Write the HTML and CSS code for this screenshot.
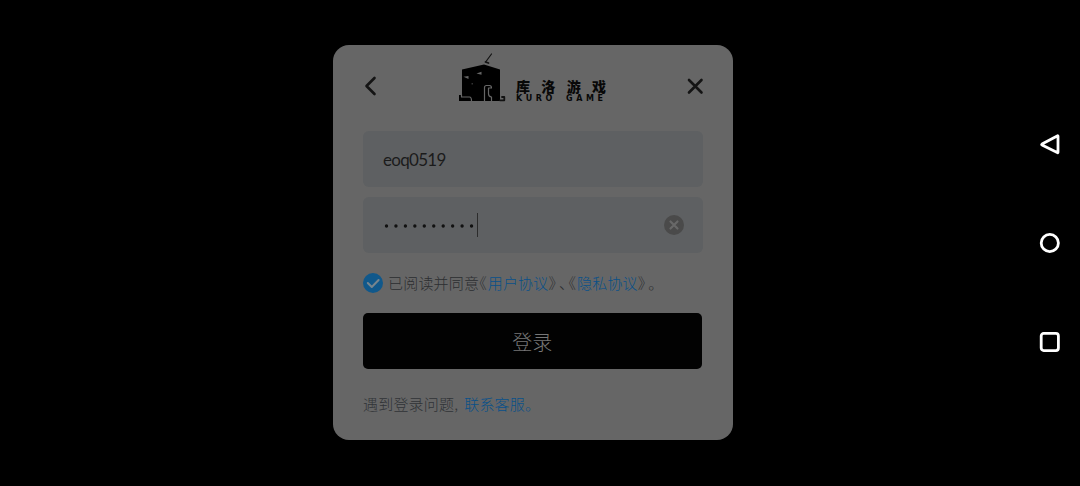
FILE: index.html
```html
<!DOCTYPE html>
<html lang="zh-CN">
<head>
    <meta charset="utf-8">
    <title>库洛游戏</title>
    <link rel="stylesheet" href="styles.css">
</head>
<body>
    <main class="stage">
        <form class="card">
            <header class="header">
                <svg class="back" width="14" height="20" viewBox="0 0 14 20"><path d="M11.500 2 3.500 10l8 8"/></svg>
                <div class="logo">
                    <svg class="house" width="48" height="50" viewBox="0 0 48 50">
                        <path d="M4 16.500 26 11.500 42 16.500V48H1v-6h3z"/>
                        <path class="stroke" d="m33.500 1-5.500 7.500"/>
                        <path class="stroke thick" d="m27.500 9 3 1"/>
                        <path class="stroke thick" d="M42 47.300h4.300V44H44"/>
                        <path class="cut" d="M5.500 23.800 10.500 23v3zM18.500 20.500l5-1.800v3z"/>
                        <path class="cut dim" d="M13.500 30h1.500v1.500h-1.500z"/>
                        <path class="line" d="M3.500 41.500v2.500h8q2 0 2 4M26.500 48V34.500q0-2 2-2h3q2 0 2 2.500h-3v6q0 2.500 3 3V48"/>
                    </svg>
                    <div class="brand">
                        <div class="brand-cn"><span>库</span><span>洛</span><span>游</span><span>戏</span></div>
                        <div class="brand-en"><span>KURO</span><span>GAME</span></div>
                    </div>
                </div>
                <svg class="close" width="18" height="18" viewBox="0 0 18 18"><path d="m3 3 12.500 12.500m0-12.500L3 15.500"/></svg>
            </header>

            <div class="field">eoq0519</div>
            <div class="field password">
                <svg class="dots" width="92" height="4" viewBox="0 0 92 4"><path d="M3.500 2h86"/></svg>
                <i class="caret"></i>
                <svg class="clear" width="20" height="20" viewBox="0 0 20 20"><circle cx="10" cy="10" r="10"/><path d="m6.500 6.500 7 7m0-7-7 7"/></svg>
            </div>

            <div class="agree">
                <svg class="check" width="20" height="20" viewBox="0 0 20 20"><circle cx="10" cy="10" r="10"/><path d="m4.800 10 4 4 6.800-7"/></svg>
                <span>已阅读并同意</span><span class="mark">《</span><a>用户协议</a><span class="mark">》</span><span class="mark comma">、</span><span class="mark">《</span><a>隐私协议</a><span class="mark">》</span><span class="mark stop">。</span>
            </div>

            <div class="submit">登录</div>

            <div class="help"><span>遇到登录问题</span><span class="latin-comma">,</span><a>联系客服。</a></div>
        </form>
    </main>

    <nav class="navbar">
        <svg width="22" height="22" viewBox="0 0 22 22"><path d="M19 3.300v15.900q0 .8-.8.400L3 11.900q-.7-.4 0-.8L18.200 2.900q.8-.4.8.4z"/></svg>
        <svg width="22" height="22" viewBox="0 0 22 22"><circle cx="10.800" cy="11" r="8.600"/></svg>
        <svg width="22" height="22" viewBox="0 0 22 22"><rect x="2.200" y="2.400" width="17.200" height="17.200" rx="2.500"/></svg>
    </nav>
</body>
</html>
```

FILE: styles.css
```css
* { box-sizing: border-box; }
body { margin: 0; height: 486px; display: flex; overflow: hidden; background: #000; font-family: "Liberation Sans", "Noto Sans CJK SC", sans-serif; }
svg { display: block; flex: none; fill: none; stroke-linecap: round; stroke-linejoin: round; }

.stage { width: 1029px; padding: 45px 0 0 332.5px; }
.card { width: 400px; height: 395.4px; padding: 0 30px 0 30.5px; border-radius: 16px; background: #666; }

.header { height: 86.4px; display: flex; align-items: flex-start; }
.back { margin-top: 31px; stroke: #141414; stroke-width: 2.6; }
.close { margin: 32px -1px 0 auto; stroke: #141414; stroke-width: 2.6; }
.logo { display: flex; margin: 8px 0 0 81px; }
.house { fill: #000; }
.house .stroke { fill: none; stroke: #111; stroke-width: 1.2; }
.house .thick { stroke-width: 1.8; }
.house .cut { fill: #666; }
.house .dim { fill: #333; }
.house .line { fill: none; stroke: #666; stroke-width: 1.2; }
.brand { width: 90px; margin: 25px 0 0 10px; color: #080808; }
.brand-cn { display: flex; justify-content: space-between; font: 900 14px/16px "Noto Sans CJK SC", sans-serif; }
.brand-en { display: flex; justify-content: space-between; font: bold 8px/9px "DejaVu Sans", sans-serif; }
.brand-en span { width: 40px; letter-spacing: 3.6px; white-space: nowrap; }

.field { height: 56px; display: flex; align-items: center; margin-bottom: 10px; padding: 1px 18px 0 20px; border-radius: 6px; background: #5e6062; color: #1b1b1b; font: 17px Lato, sans-serif; letter-spacing: -.7px; }
.password { padding: 0 19px 0 20px; margin-bottom: 20px; }
.dots { margin-top: 2px; stroke: #111; stroke-width: 3.4; stroke-dasharray: 0 9.45; }
.caret { width: 1px; height: 24px; margin-left: 2px; background: #2c2c2c; }
.clear { margin-left: auto; }
.clear circle { fill: #4a4a4a; }
.clear path { stroke: #686868; stroke-width: 2.2; }

.agree, .help { display: flex; align-items: center; height: 20px; color: #2c2e31; font: 300 15px/20px "Noto Sans CJK SC", sans-serif; letter-spacing: .2px; white-space: nowrap; }
.agree a, .help a { color: #085089; }
.check { margin-right: 5px; }
.check circle { fill: #10588b; }
.check path { stroke: #77858e; stroke-width: 2; }
.mark { width: 8.5px; font-feature-settings: "halt"; }
.comma { width: 11.5px; padding-left: 2px; }
.stop { padding-left: 2px; }

.submit { height: 56px; display: flex; align-items: center; justify-content: center; margin: 20px 1px 25px 0; border-radius: 5px; background: #020202; color: #777; font: 300 20px "Noto Sans CJK SC", sans-serif; }
.help { color: #303336; }
.latin-comma { width: 10px; }

.navbar { display: flex; flex-direction: column; gap: 77px; padding: 133px 0 0 10px; }
.navbar svg { stroke: #fff; stroke-width: 2.8; }
```
